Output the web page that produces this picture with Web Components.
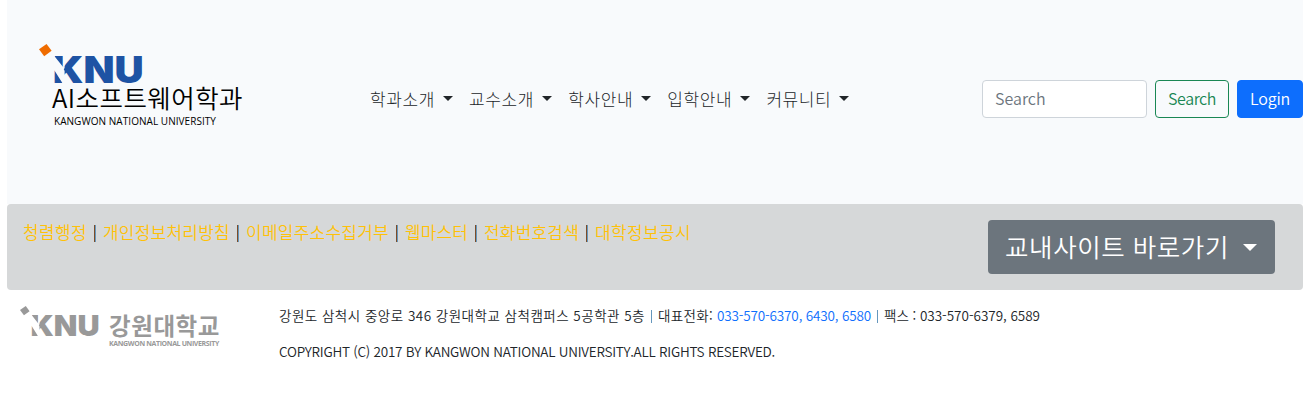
<!DOCTYPE html>
<html lang="ko">
<head>
<meta charset="utf-8">
<title>AI소프트웨어학과</title>
<style>
body{margin:0;background:#fff;color:#212529;font-family:"Open Sans","Noto Sans CJK KR",sans-serif;font-size:16px;font-weight:300;line-height:24px}
</style>
</head>
<body>
<dept-page></dept-page>
<script>
const define = (name, html, init) => customElements.define(name, class extends HTMLElement {
  connectedCallback() {
    if (this.shadowRoot) return;
    this.attachShadow({mode: 'open'}).innerHTML = html;
    if (init) init.call(this, this.shadowRoot);
  }
});

// A text run spaced evenly to a given width.
define('fit-text', `<style>:host{display:inline-block;white-space:pre;flex:none}span{display:inline-block}</style><span><slot></slot></span>`, function (root) {
  const w = +this.getAttribute('w'), s = root.querySelector('span');
  const n = [...this.textContent].length;
  s.style.letterSpacing = (w - s.getBoundingClientRect().width) / n + 'px';
  this.style.width = w + 'px';
});

define('drop-caret', `<style>:host{display:block;width:0;height:0;border:.3em solid transparent;border-top-color:currentColor;border-bottom:0}</style>`);

define('knu-mark', `<style>:host{display:block}svg{display:block;overflow:visible}text{font:900 37.2px Inter,sans-serif;fill:currentColor}</style>
<svg width="104" height="40" viewBox="0 0 104 40"><path d="M0 5.2 7.6 0l5 6.8-7.4 5.4z" fill="var(--mark,#ef6c00)"/>
<text x="13.8" y="39" textLength="91" lengthAdjust="spacingAndGlyphs">KNU</text>
<path d="M14.5 11 24.3 23.3V11h1.3v13l-.8 1.3.8 1.7V40H24L15.8 27 14.5 26z" fill="var(--cut,#f8fafc)"/></svg>`);

define('nav-item', `<style>:host{display:flex;align-items:center;gap:8px;color:#212529;font-size:17px}drop-caret{margin-top:-4px}</style><fit-text></fit-text><drop-caret></drop-caret>`, function (root) {
  const t = document.createElement('fit-text');
  t.setAttribute('w', '65'); t.textContent = this.getAttribute('label');
  root.querySelector('fit-text').replaceWith(t);
});

define('site-brand', `<style>:host{display:block;color:#000}knu-mark{color:#1e53a4}.n{display:flex;font-family:"Noto Sans CJK KR",sans-serif;font-weight:350;font-size:25.5px;line-height:30px;margin:-2px 0 0 13px}.e{display:flex;font-size:10px;line-height:14px;margin:2px 0 0 15px;font-weight:400}</style>
<knu-mark></knu-mark><div class="n"><fit-text w="191">AI소프트웨어학과</fit-text></div><div class="e"><fit-text w="162">KANGWON NATIONAL UNIVERSITY</fit-text></div>`);

define('site-nav', `<style>
:host{display:flex;height:204px;background:#f8fafc;box-sizing:border-box}
site-brand{margin:44px 0 0 32px;width:204px}
nav{display:flex;gap:16.1px;margin:88px 0 0 127px;height:24px}
form{display:flex;gap:8px;margin:80px 0 0 auto;height:38px}
input,button{box-sizing:border-box;height:38px;font:inherit;font-family:"Noto Sans CJK KR",sans-serif;font-weight:350;border-radius:4px;padding:0 12px;margin:0;display:flex;align-items:center;justify-content:center}
input{width:165px;border:1px solid #ced4da;background:#fff;color:#212529;padding-bottom:2px}
input::placeholder{color:#6c757d;opacity:1}
button{border:1px solid #198754;color:#198754;background:none;width:74px;padding-bottom:2px}
.p{background:#0d6efd;border-color:#0d6efd;color:#fff;width:66px}
</style><site-brand></site-brand>
<nav><nav-item label="학과소개"></nav-item><nav-item label="교수소개"></nav-item><nav-item label="학사안내"></nav-item><nav-item label="입학안내"></nav-item><nav-item label="커뮤니티"></nav-item></nav>
<form><input placeholder="Search"><button type="button"><fit-text w="48">Search</fit-text></button><button type="button" class="p"><fit-text w="40">Login</fit-text></button></form>`);

define('link-bar', `<style>
:host{display:flex;justify-content:space-between;height:86px;box-sizing:border-box;padding:16px 28px 0 16px;background:#d6d8d9;border-radius:4px;color:#141619}
.l{display:flex;height:24px;color:#ffc107;font-size:17px;font-weight:350}.l fit-text{margin-top:1px}i{font-style:normal;width:16px;display:flex;justify-content:center}
i::before{content:"";width:2px;height:17px;margin:5px 1px 0 0;background:linear-gradient(90deg,#7c4c28 50%,#6597bd 50%)}
button{box-sizing:border-box;width:287px;height:54px;border:0;border-radius:4px;background:#6c757d;color:#fff;font:inherit;font-size:25.5px;padding:0 17px;display:flex;align-items:center;gap:14px;font-weight:350}
drop-caret{font-size:24px}
</style><div class="l"><fit-text w="64">청렴행정</fit-text><i></i><fit-text w="127">개인정보처리방침</fit-text><i></i><fit-text w="143">이메일주소수집거부</fit-text><i></i><fit-text w="63">웹마스터</fit-text><i></i><fit-text w="95">전화번호검색</fit-text><i></i><fit-text w="96">대학정보공시</fit-text></div>
<button><fit-text w="224">교내사이트 바로가기</fit-text><drop-caret></drop-caret></button>`);

define('site-footer', `<style>
:host{display:flex;font-family:"Noto Sans CJK KR",sans-serif;font-size:13.5px;font-weight:350;line-height:20px;color:#212529}
.logo{--mark:#999;--cut:#fff;color:#999;display:flex;width:259px;margin:16px 0 0 13px;flex:none;box-sizing:border-box}
.m{width:80px;height:40px;flex:none}.m knu-mark{transform:scale(.76);transform-origin:0 0}
.k{margin-left:9px;display:flex;flex-direction:column}.b{font-size:23.5px;font-weight:700;line-height:24px;margin-top:7px}
.s{font:700 7px/9px "Open Sans",sans-serif;margin-top:2px;display:flex}
.t{margin-top:15px}.r{display:flex;height:20px;white-space:pre}.r+.r{margin-top:16px}.blue{color:#0d6efd}i{width:13px;display:flex;justify-content:center}i::before{content:"";width:1px;height:13px;margin-top:5px;background:#6597bd}
</style><div class="logo"><div class="m"><knu-mark></knu-mark></div><div class="k"><fit-text class="b" w="111">강원대학교</fit-text><div class="s"><fit-text w="110">KANGWON NATIONAL UNIVERSITY</fit-text></div></div></div>
<div class="t"><div class="r"><fit-text w="366">강원도 삼척시 중앙로 346 강원대학교 삼척캠퍼스 5공학관 5층</fit-text><i></i><fit-text w="59">대표전화: </fit-text><fit-text class="blue" w="154">033-570-6370, 6430, 6580</fit-text><i></i><fit-text w="156">팩스 : 033-570-6379, 6589</fit-text></div>
<div class="r"><fit-text w="496">COPYRIGHT (C) 2017 BY KANGWON NATIONAL UNIVERSITY.ALL RIGHTS RESERVED.</fit-text></div></div>`);

define('dept-page', `<style>:host{display:block;width:1296px;height:405px;margin-left:7px;overflow:hidden}</style><site-nav></site-nav><link-bar></link-bar><site-footer></site-footer>`);
</script>
</body>
</html>
